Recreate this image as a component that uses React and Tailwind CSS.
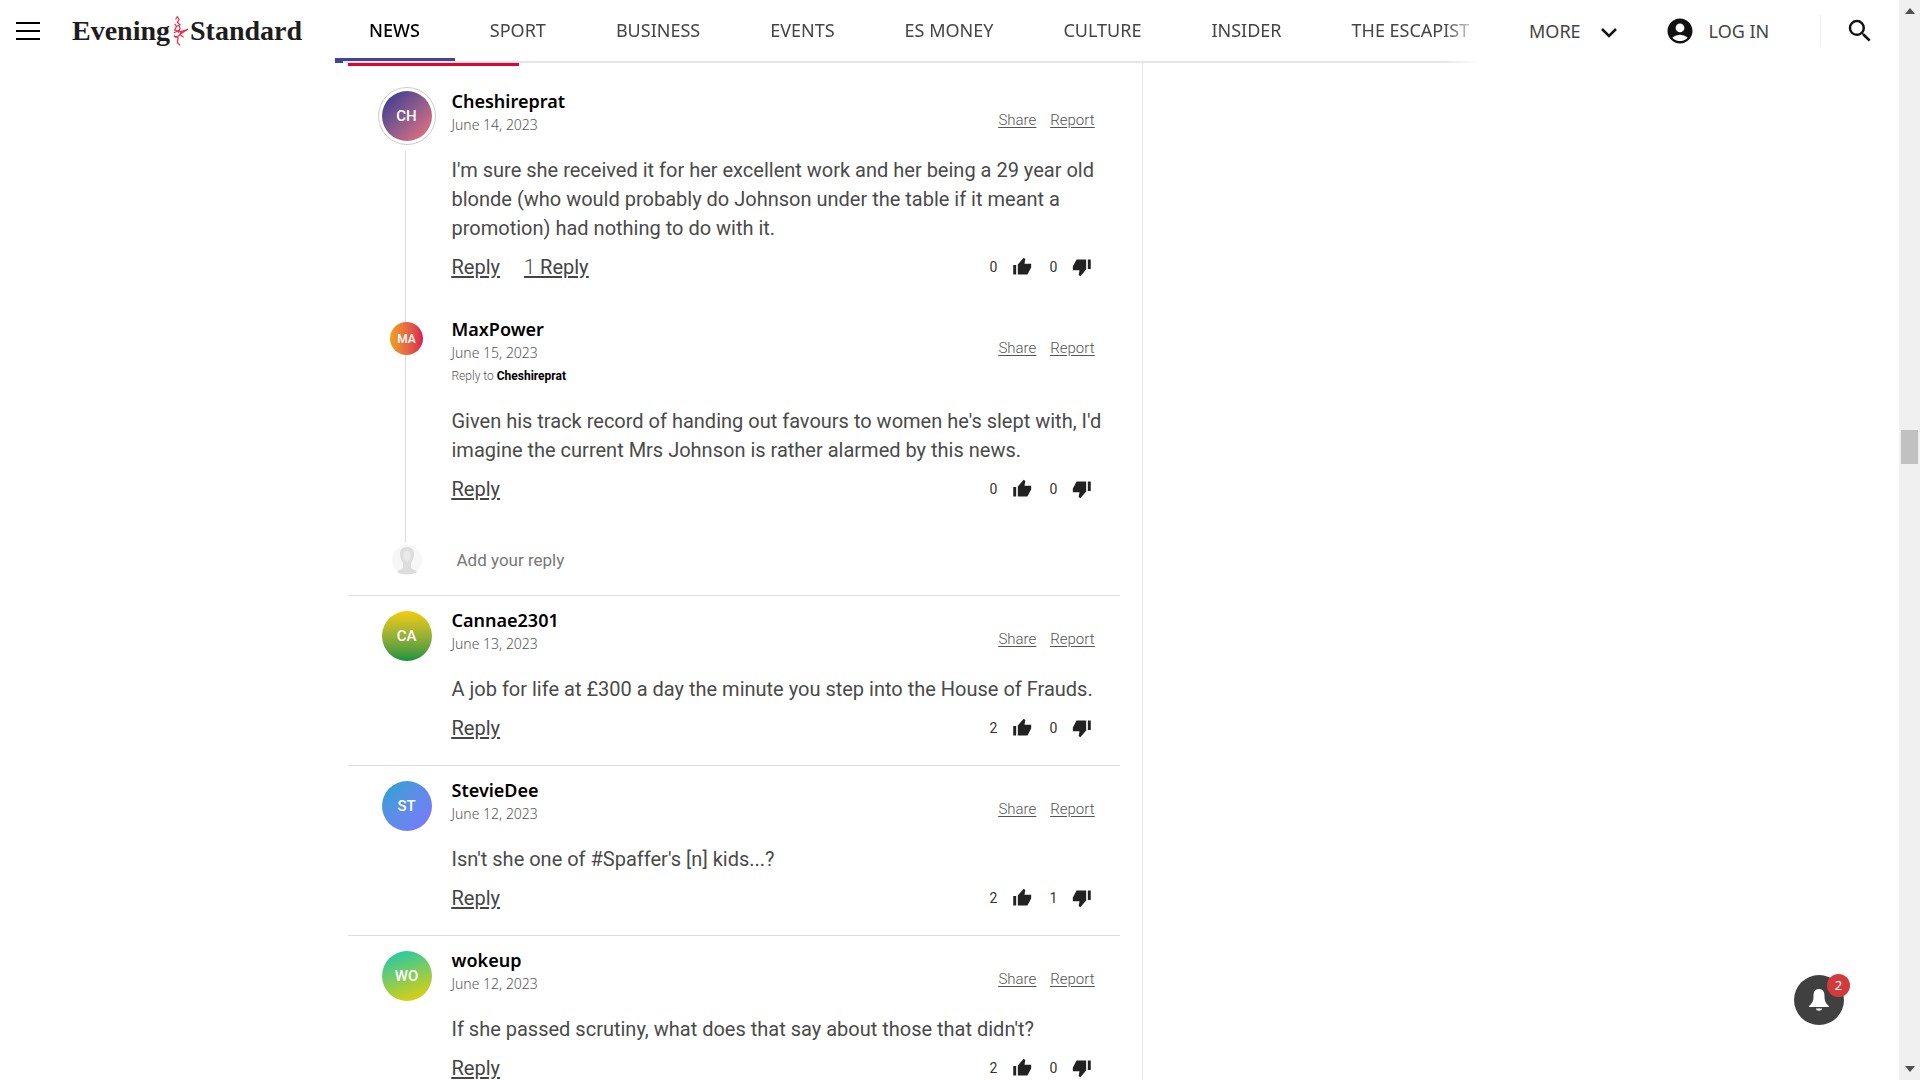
import { MdAccountCircle, MdSearch } from "react-icons/md";

const NAV = ["NEWS", "SPORT", "BUSINESS", "EVENTS", "ES MONEY", "CULTURE", "INSIDER", "THE ESCAPIST"];

const COMMENTS = [
  {
    name: "Cannae2301", date: "June 13, 2023", initials: "CA", up: 2, down: 0,
    avatar: "bg-linear-to-b from-[#f3cc00] to-[#00923f]",
    text: "A job for life at £300 a day the minute you step into the House of Frauds.",
  },
  {
    name: "StevieDee", date: "June 12, 2023", initials: "ST", up: 2, down: 1,
    avatar: "bg-linear-to-br from-[#14a3d0] to-[#7d72ff]",
    text: "Isn't she one of #Spaffer's [n] kids...?",
  },
  {
    name: "wokeup", date: "June 12, 2023", initials: "WO", up: 2, down: 0,
    avatar: "bg-linear-160/srgb from-[#14c8b4] to-[#f0d000]",
    text: "If she passed scrutiny, what does that say about those that didn't?",
  },
];

function Thumb({ down }) {
  return (
    <svg viewBox="0 0 24 24" className={down ? "size-5 rotate-180" : "size-5"} fill="#222" aria-hidden="true">
      <path d="M1.500 21H5V9.500H1.500zM7 21h11.500L23 12.500V8h-8l1-5.500L14 1 7 9z" />
    </svg>
  );
}

function Votes({ up, down }) {
  return (
    <div className="flex items-center text-sm leading-5 text-[#333]">
      <span className="w-4 text-center">{up}</span>
      <button className="ml-[10px]" aria-label="Like"><Thumb /></button>
      <span className="ml-[14px] w-4 text-center">{down}</span>
      <button className="ml-[10px]" aria-label="Dislike"><Thumb down /></button>
    </div>
  );
}

function Comment({ c, avatar, children }) {
  return (
    <article className="flex">
      <div className="flex w-[104px] shrink-0 items-start justify-center pt-[3px] pl-[14px]">{avatar}</div>
      <div className="min-w-0 flex-1 pr-4">
        <div className="flex items-start justify-between pr-2">
          <div>
            <h3 className="font-['Noto_Sans'] text-lg leading-6 font-semibold text-black">{c.name}</h3>
            <p className="font-['Noto_Sans'] text-sm leading-6 font-light text-[#555]">{c.date}</p>
            {c.to && (
              <p className="text-xs leading-[23px] font-light text-[#555]">
                Reply to <span className="font-bold text-black">{c.to}</span>
              </p>
            )}
          </div>
          <div className="mt-[21px] mr-px flex gap-[14px] text-[15px] leading-5 font-light text-[#555] underline underline-offset-2">
            <a href="#share">Share</a>
            <a href="#report">Report</a>
          </div>
        </div>
        <p className="mt-[19px] text-xl leading-[29px] text-[#4a4a4a]">{c.text}</p>
        <div className="mt-3 flex items-center justify-between pr-3">
          <div className="flex gap-6 text-xl leading-6 text-[#444] underline underline-offset-2">
            <button className="underline">Reply</button>
            {children}
          </div>
          <Votes up={c.up} down={c.down} />
        </div>
      </div>
    </article>
  );
}

function Avatar({ c, small }) {
  return (
    <div className={`${small ? "mt-[2px] size-[33px] text-xs" : "size-[50px] text-[15px]"} flex items-center justify-center rounded-full font-medium text-white ${c.avatar}`}>
      {c.initials}
    </div>
  );
}

const PARENT = {
  name: "Cheshireprat", date: "June 14, 2023", initials: "CH", up: 0, down: 0,
  avatar: "bg-linear-to-br from-[#2b3490] to-[#f4717a]",
  text: "I'm sure she received it for her excellent work and her being a 29 year old blonde (who would probably do Johnson under the table if it meant a promotion) had nothing to do with it.",
};
const CHILD = {
  name: "MaxPower", date: "June 15, 2023", initials: "MA", up: 0, down: 0, to: "Cheshireprat",
  avatar: "bg-linear-to-r from-[#eda012] to-[#d91a50]",
  text: "Given his track record of handing out favours to women he's slept with, I'd imagine the current Mrs Johnson is rather alarmed by this news.",
};

function Logo() {
  return (
    <a href="#home" aria-label="Evening Standard" className="flex items-center font-['Liberation_Serif'] text-[28px] leading-8 font-bold text-[#1d1d1d]">
      <span>Evening</span>
      <svg viewBox="0 0 20 36" className="h-8 w-5" fill="none" stroke="#f0314c" strokeWidth="1.400" aria-hidden="true">
        <path d="M5 5l2-3 2 3-2 3 3 3-4 2-2-3M6 13l-2 4 4 1M9 11l1 4-2 5" />
        <path d="M3 20l5-2 4 1-3 4-4 2-2-2M5 24l3 1M8 25l-1 6 3 3M10 22l4 3" />
        <path d="M10 19l9-3-8 5z" fill="#f0314c" />
      </svg>
      <span>Standard</span>
    </a>
  );
}

function Header() {
  return (
    <header className="sticky top-0 z-10 flex h-[63px] items-start bg-white font-['Noto_Sans'] text-lg text-[#444]">
      <div className="flex h-[62px] w-[335px] shrink-0 items-center">
        <button aria-label="Menu" className="mr-8 ml-4 flex w-6 flex-col gap-[6px]">
          <span className="h-[2px] bg-black" />
          <span className="h-[2px] bg-black" />
          <span className="h-[2px] bg-black" />
        </button>
        <Logo />
      </div>
      <nav className="relative flex h-[63px] max-w-[1144px] min-w-0 flex-1 overflow-hidden [mask-image:linear-gradient(to_right,black_97%,transparent)]">
        <div className="absolute inset-x-0 bottom-0 h-[2px] bg-[#e6e6e6]" />
        <div className="absolute bottom-0 left-0 h-[2px] w-2 bg-[#3f4694]" />
        {NAV.map((n, i) => (
          <a
            key={n}
            href="#nav"
            className={`flex h-[61px] shrink-0 items-center border-b-3 px-[35px] pt-[2px] whitespace-nowrap ${i === 0 ? "-ml-px border-[#3f4694] font-medium text-black" : "border-transparent"}`}
          >
            {n}
          </a>
        ))}
      </nav>
      <div className="flex h-[62px] shrink-0 items-center">
        <button className="ml-[50px] flex items-center gap-5">
          MORE
          <svg viewBox="0 0 16 10" className="mt-1 h-[10px] w-4" fill="none" stroke="#111" strokeWidth="2.500" aria-hidden="true">
            <path d="M1 1l7 7 7-7" />
          </svg>
        </button>
        <button className="ml-12 flex items-center gap-[14px]">
          <MdAccountCircle className="size-[30px] text-[#111]" />
          LOG IN
        </button>
        <span className="ml-[51px] h-8 w-px bg-[#eee]" />
        <button aria-label="Search" className="ml-6"><MdSearch className="size-[30px] text-[#111]" /></button>
      </div>
    </header>
  );
}

export default function App() {
  return (
    <div className="flex h-screen overflow-hidden bg-white font-['Roboto',sans-serif]">
      <div className="relative min-w-0 flex-1 overflow-hidden">
        <Header />
        <main className="mx-auto max-w-[1204px]">
          <div className="w-[795px] border-r border-[#e4e4e4]">
            <div className="h-[3px] w-[171px] bg-[#e4032e]" />
            <div className="w-[772px]">
              <section className="relative border-b border-[#ddd] pt-[23px]">
                <div className="absolute top-[85px] bottom-[52px] left-[57px] w-px bg-[#ddd]" />
                <Comment
                  c={PARENT}
                  avatar={
                    <div className="relative -mt-[5px] rounded-full border border-[#ccc] bg-white p-[3px]"><Avatar c={PARENT} /></div>
                  }
                >
                  <button className="underline"><span className="font-light">1</span> Reply</button>
                </Comment>
                <div className="relative mt-[38px]">
                  <Comment c={CHILD} avatar={<Avatar c={CHILD} small />} />
                </div>
                <div className="mt-[43px] mb-[19px] flex items-center">
                  <svg viewBox="0 0 32 32" className="ml-[43px] size-8" aria-hidden="true">
                    <circle cx="16" cy="16" r="15" fill="#f7f7f7" />
                    <path d="M16 3c-5 0-7 3-7 7 0 5 2 7 3 9v5c-2 2-5 2-6 4 3 3 17 3 20 0-1-2-4-2-6-4v-5c1-2 3-4 3-9 0-4-2-7-7-7z" fill="#ddd" />
                    <path d="M16 7c-3 0-4 2-4 5l3 6h2l3-6c0-3-1-5-4-5z" fill="#e9e9e9" />
                  </svg>
                  <input aria-label="Add your reply" placeholder="Add your reply" className="ml-[34px] h-8 flex-1 text-[17px] placeholder:text-[#777]" />
                </div>
              </section>
              {COMMENTS.map((c) => (
                <section key={c.name} className="border-b border-[#ddd] pt-3 pb-[25px]">
                  <Comment c={c} avatar={<Avatar c={c} />} />
                </section>
              ))}
            </div>
          </div>
        </main>
        <button aria-label="Notifications" className="absolute right-[55px] bottom-[55px] flex size-[50px] items-center justify-center rounded-full bg-[#404040]">
          <svg viewBox="0 0 24 24" className="size-6" fill="#fff" aria-hidden="true">
            <path d="M12 1C8 1 6.500 4 6.500 8c0 5-1 7-4.500 10v1h20v-1c-3.500-3-4.500-5-4.500-10 0-4-1.500-7-5.500-7zM9 20.500h6c0 3-6 3-6 0z" />
          </svg>
          <span className="absolute -top-px -right-[6px] flex size-[23px] items-center justify-center rounded-full bg-[#d33a3c] font-['Noto_Sans'] text-[13px] text-white">2</span>
        </button>
      </div>
      <aside aria-hidden="true" className="flex w-[21px] shrink-0 flex-col items-center justify-between bg-[#f0f0f0] py-2">
        <svg viewBox="0 0 10 6" className="h-[6px] w-[10px]" fill="#505050"><path d="M0 6l5-6 5 6z" /></svg>
        <div className="mb-[186px] h-[34px] w-[17px] bg-[#c1c1c1]" />
        <svg viewBox="0 0 10 6" className="h-[6px] w-[10px]" fill="#505050"><path d="M0 0l5 6 5-6z" /></svg>
      </aside>
    </div>
  );
}
